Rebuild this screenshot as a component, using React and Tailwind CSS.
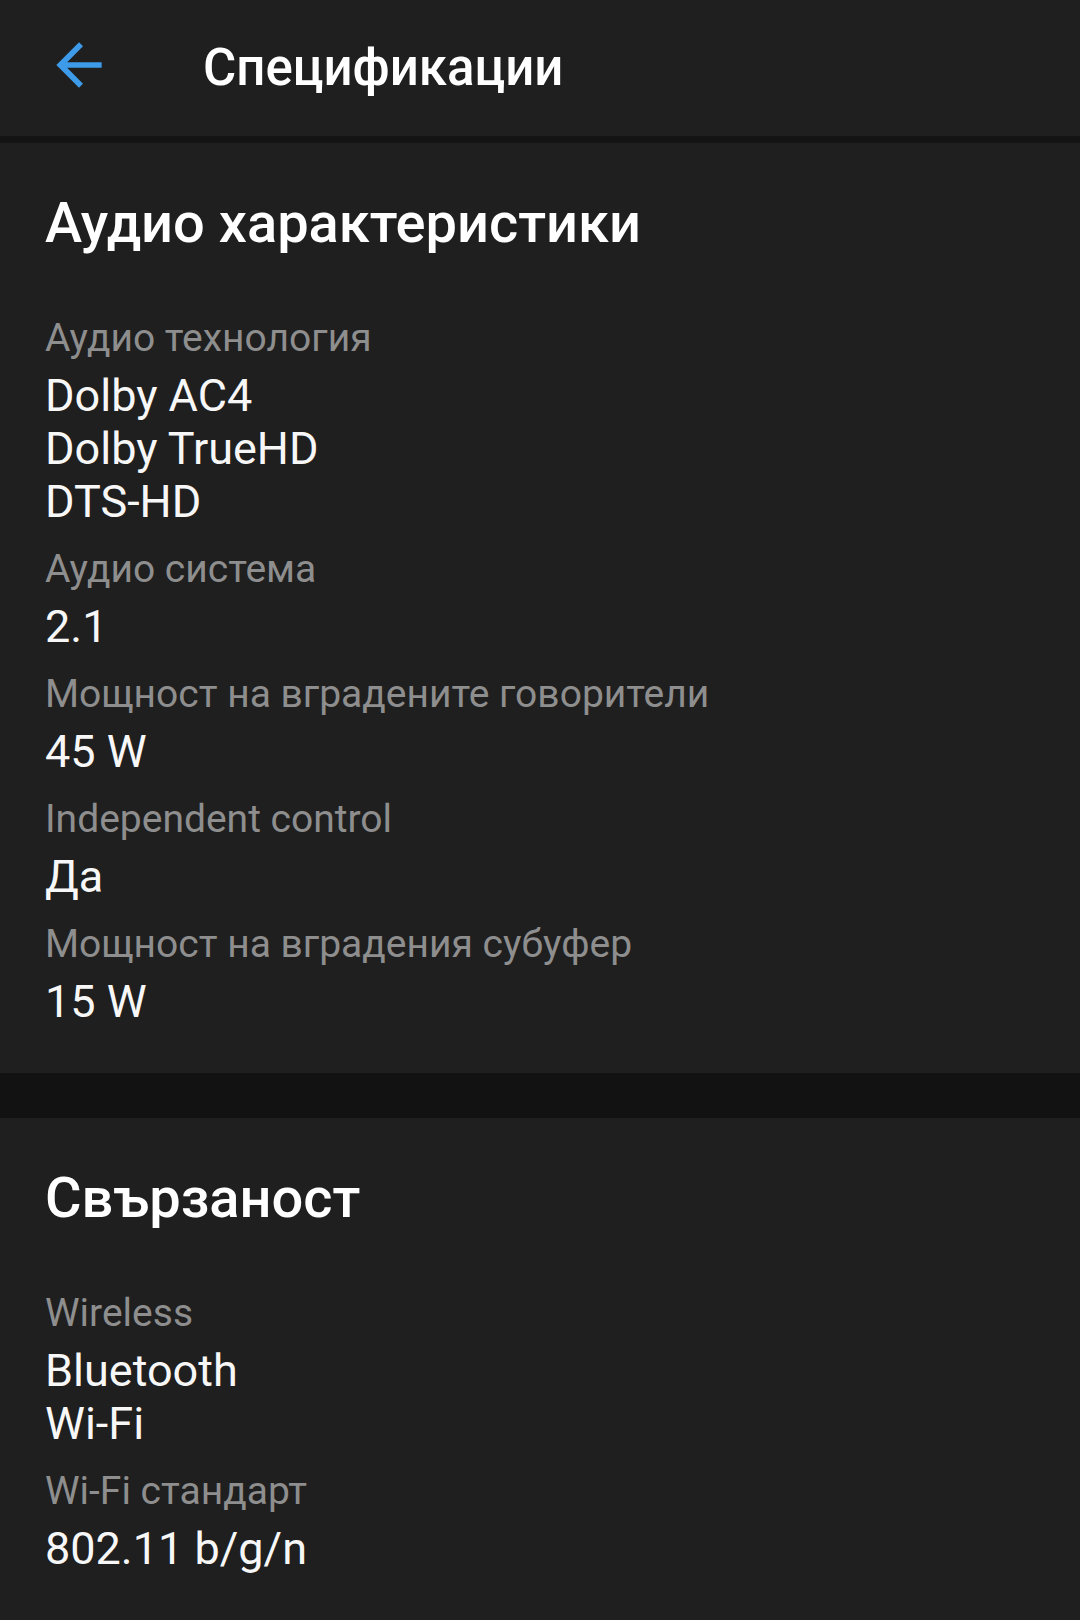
import React from "react";

const sections = [
  {
    title: "Аудио характеристики",
    items: [
      { label: "Аудио технология", values: ["Dolby AC4", "Dolby TrueHD", "DTS-HD"] },
      { label: "Аудио система", values: ["2.1"] },
      { label: "Мощност на вградените говорители", values: ["45 W"] },
      { label: "Independent control", values: ["Да"] },
      { label: "Мощност на вградения субуфер", values: ["15 W"] },
    ],
  },
  {
    title: "Свързаност",
    items: [
      { label: "Wireless", values: ["Bluetooth", "Wi-Fi"] },
      { label: "Wi-Fi стандарт", values: ["802.11 b/g/n"] },
    ],
  },
];

const BackArrow = () => (
  <svg viewBox="0 0 24 24" className="w-[68px] h-[68px] mb-[7px]" fill="#3d9be9">
    <path d="M20 11H7.83l5.59-5.59L12 4l-8 8 8 8 1.41-1.41L7.83 13H20v-2z" />
  </svg>
);

const SpecItem = ({ item }) => (
  <div>
    <div className="text-[39px] leading-[62px] text-[#8e8e8e]">{item.label}</div>
    {item.values.map((v) => (
      <div key={v} className="text-[45px] leading-[53px] text-[#f7f7f7]">
        {v}
      </div>
    ))}
  </div>
);

const Section = ({ section }) => (
  <div className="bg-[#1f1f1f] px-[45px] pt-[45px] pb-[45px]">
    <h2 className="text-[56px] leading-[70px] font-medium text-white mb-[49px]">{section.title}</h2>
    <div className="flex flex-col gap-[10px]">
      {section.items.map((item) => (
        <SpecItem key={item.label} item={item} />
      ))}
    </div>
  </div>
);

export default function App() {
  return (
    <div className="min-h-[1620px] bg-[#1f1f1f]" style={{ fontFamily: "Roboto, 'Noto Sans', sans-serif" }}>
      {/* Toolbar */}
      <div className="h-[143px] flex items-center pl-[45px] bg-[#1f1f1f] border-b-[7px] border-[#141414]">
        <BackArrow />
        <div className="ml-[90px] text-[51px] font-medium text-white">Спецификации</div>
      </div>

      <Section section={sections[0]} />
      <div className="h-[45px] bg-[#121212]" />
      <Section section={sections[1]} />
    </div>
  );
}
